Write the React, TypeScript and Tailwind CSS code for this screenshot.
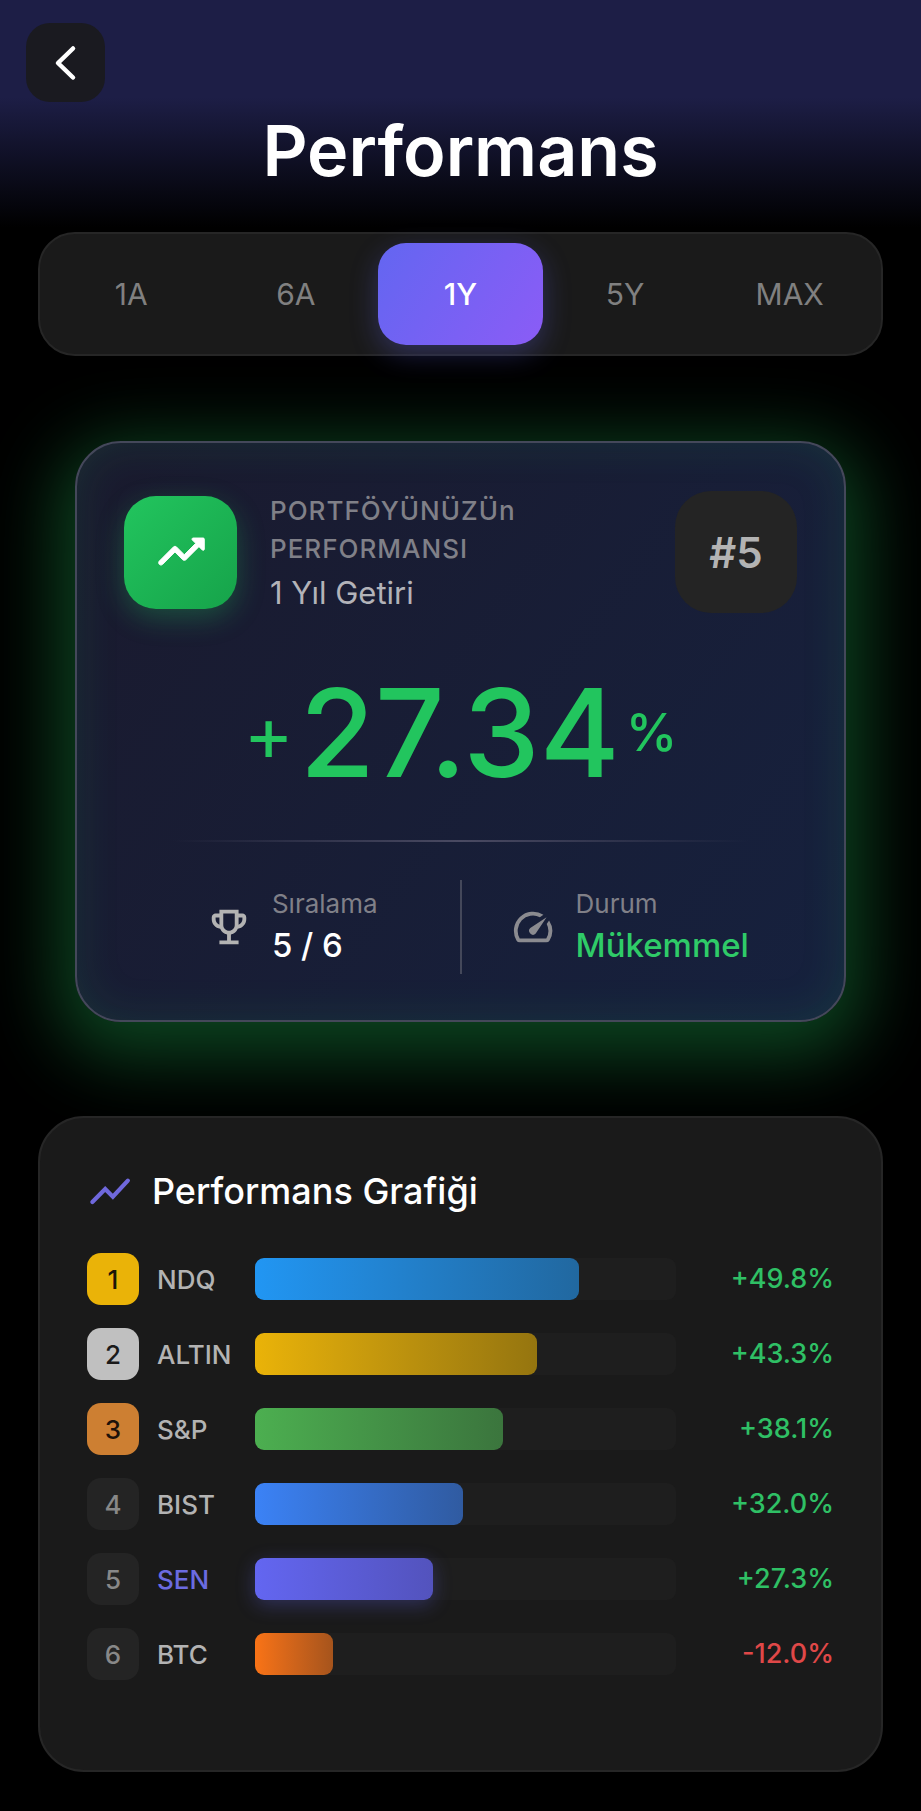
import { useState } from 'react';
import clsx from 'clsx';
import { MdOutlineEmojiEvents, MdSpeed } from 'react-icons/md';

const periods = ['1A', '6A', '1Y', '5Y', 'MAX'];

interface ChartRow {
  name: string;
  value: string;
  width: number;
  bar: string;
  badge: string;
  self?: boolean;
}

const plainBadge = 'bg-[#242424] text-[#888888]';

const rows: ChartRow[] = [
  { name: 'NDQ', value: '+49.8%', width: 77, bar: 'from-[#2196f3] to-[#2168a0]', badge: 'bg-[#eab308] text-[#1c1608]' },
  { name: 'ALTIN', value: '+43.3%', width: 67, bar: 'from-[#eab308] to-[#95750f]', badge: 'bg-[#c0c0c0] text-[#1a1a1a]' },
  { name: 'S&P', value: '+38.1%', width: 59, bar: 'from-[#4caf50] to-[#3b753d]', badge: 'bg-[#cd7f32] text-[#1c120a]' },
  { name: 'BIST', value: '+32.0%', width: 49.5, bar: 'from-[#3b82f6] to-[#305ba1]', badge: plainBadge },
  { name: 'SEN', value: '+27.3%', width: 42.3, bar: 'from-[#6366f1] to-[#5353bd]', badge: plainBadge, self: true },
  { name: 'BTC', value: '-12.0%', width: 18.5, bar: 'from-[#f97316] to-[#a6541c]', badge: plainBadge },
];

function BackIcon() {
  return (
    <svg viewBox="0 0 40 40" className="size-10" fill="none" stroke="currentColor" strokeWidth="4.5" strokeLinecap="round" strokeLinejoin="round">
      <path d="M27 5.5 12 20l15 14.5" />
    </svg>
  );
}

function TrendIcon() {
  return (
    <svg viewBox="0 0 24 24" className="size-14" fill="currentColor" stroke="currentColor" strokeWidth="0.4">
      <path d="M16.85 6.85l1.44 1.44-4.88 4.88-3.29-3.29c-.39-.39-1.02-.39-1.41 0l-6 6.01c-.39.39-.39 1.02 0 1.41.39.39 1.02.39 1.41 0L9.41 12l3.29 3.29c.39.39 1.02.39 1.41 0l5.59-5.58 1.44 1.44c.31.31.85.09.85-.35V6.5c.01-.28-.21-.5-.49-.5h-4.29c-.45 0-.67.54-.36.85z" />
    </svg>
  );
}

function ChartIcon() {
  return (
    <svg viewBox="0 0 24 24" className="size-[46px]" fill="none" stroke="currentColor" strokeWidth="2.2" strokeLinecap="round">
      <path d="M2.8 17.7 9.5 11l4 4 7.8-8.4" />
    </svg>
  );
}

function PeriodTabs() {
  const [period, setPeriod] = useState('1Y');

  return (
    <div className="mx-[38px] flex rounded-[37px] border-2 border-[#262626] bg-[#1a1a1a] p-[9px]">
      {periods.map((p) => (
        <button
          key={p}
          type="button"
          onClick={() => setPeriod(p)}
          className={clsx(
            'h-[102px] flex-1 rounded-[28px] text-[30px]',
            period === p
              ? 'bg-linear-[122deg] from-[#6366f1] to-[#8b5cf6] font-medium text-white shadow-[0_9px_28px_rgba(99,102,241,0.3)]'
              : 'text-[#808080]',
          )}
        >
          {p}
        </button>
      ))}
    </div>
  );
}

function SummaryCard() {
  return (
    <section className="mx-[75px] mt-[85px] rounded-[46px] border-2 border-[#44485a] bg-linear-[127deg] from-[#1a1a2e] to-[#16213e] px-[47px] pb-[46px] pt-12 shadow-[0_18px_70px_18px_rgba(34,197,94,0.34),inset_0_0_46px_rgba(34,197,94,0.12)]">
      <div className="flex items-center gap-[33px]">
        <div className="flex size-[113px] items-center justify-center rounded-[32px] bg-linear-to-br from-[#22c55e] to-[#16a34a] text-white shadow-[0_9px_28px_rgba(34,197,94,0.3)]">
          <TrendIcon />
        </div>
        <div className="flex-1">
          <h2 className="w-[300px] text-[26px] font-medium leading-[38px] tracking-[1px] text-[#808088]">
            PORTFÖYÜNÜZÜn PERFORMANSI
          </h2>
          <p className="mt-[6px] text-[31px] leading-[38px] text-[#b3b3b9]">1 Yıl Getiri</p>
        </div>
        <div className="flex size-[122px] items-center justify-center rounded-[36px] bg-[#242424] text-[42px] font-semibold text-[#b3b3b3]">
          #5
        </div>
      </div>

      <div className="mt-[50px] flex items-center justify-center gap-[6px] text-[#22c55e]">
        <span className="text-[76px] leading-none">+</span>
        <span className="text-[122px] font-medium leading-[140px]">27.34</span>
        <span className="text-[52px] font-medium leading-none">%</span>
      </div>

      <div className="mx-12 mt-[37px] h-[2px] bg-linear-to-r from-transparent via-[#4a4a62] to-transparent" />

      <div className="mt-[38px] flex h-[94px] items-center">
        <div className="flex flex-1 items-center justify-center gap-5">
          <MdOutlineEmojiEvents className="size-[46px] text-[#b3b3b3]" />
          <div>
            <div className="text-[26px] leading-[36px] text-[#808088]">Sıralama</div>
            <div className="text-[33px] font-medium leading-[46px] text-white">5 / 6</div>
          </div>
        </div>
        <div className="h-full w-[2px] bg-[#44485a]" />
        <div className="flex flex-1 items-center justify-center gap-5">
          <MdSpeed className="size-[46px] text-[#8b8b90]" />
          <div>
            <div className="text-[26px] leading-[36px] text-[#808088]">Durum</div>
            <div className="text-[33px] font-medium leading-[46px] text-[#2fcb68]">Mükemmel</div>
          </div>
        </div>
      </div>
    </section>
  );
}

function ChartCard() {
  return (
    <section className="relative mx-[38px] mt-[94px] rounded-[46px] border-2 border-[#262626] bg-[#1a1a1a] px-[47px] pb-[90px] pt-12">
      <div className="flex h-[50px] items-center gap-[19px]">
        <span className="text-[#6f68dc]">
          <ChartIcon />
        </span>
        <h2 className="text-[36px] font-medium text-white">Performans Grafiği</h2>
      </div>

      <ul className="mt-[37px] flex flex-col gap-[23px]">
        {rows.map((row, i) => (
          <li key={row.name} className="flex items-center">
            <span className={clsx('flex size-[52px] items-center justify-center rounded-[14px] text-[26px] font-medium', row.badge)}>
              {i + 1}
            </span>
            <span className={clsx('ml-[18px] w-[98px] text-[26px] font-medium', row.self ? 'text-[#6b6be0]' : 'text-[#b3b3b3]')}>
              {row.name}
            </span>
            <div className="h-[42px] flex-1 rounded-[9px] bg-[#1e1e1e]">
              <div
                className={clsx('h-full rounded-[9px] bg-linear-to-r', row.bar, row.self && 'shadow-[0_5px_19px_rgba(99,102,241,0.3)]')}
                style={{ width: `${row.width}%` }}
              />
            </div>
            <span className={clsx('w-[158px] text-right text-[27px] font-medium', row.value.startsWith('-') ? 'text-[#e04848]' : 'text-[#2fc065]')}>
              {row.value}
            </span>
          </li>
        ))}
      </ul>
    </section>
  );
}

export default function App() {
  return (
    <main className="min-h-screen bg-black pb-10 font-['Inter',sans-serif]">
      <header className="h-[232px] bg-linear-to-b/srgb from-[#1d1e46] from-42% to-black to-98% px-[26px] pt-[23px]">
        <button type="button" aria-label="Geri" className="flex size-[79px] items-center justify-center rounded-[24px] bg-[#1a1a20] text-white">
          <BackIcon />
        </button>
        <h1 className="mt-[5px] text-center text-[70px] font-semibold leading-[88px] text-white">Performans</h1>
      </header>
      <PeriodTabs />
      <SummaryCard />
      <ChartCard />
    </main>
  );
}
